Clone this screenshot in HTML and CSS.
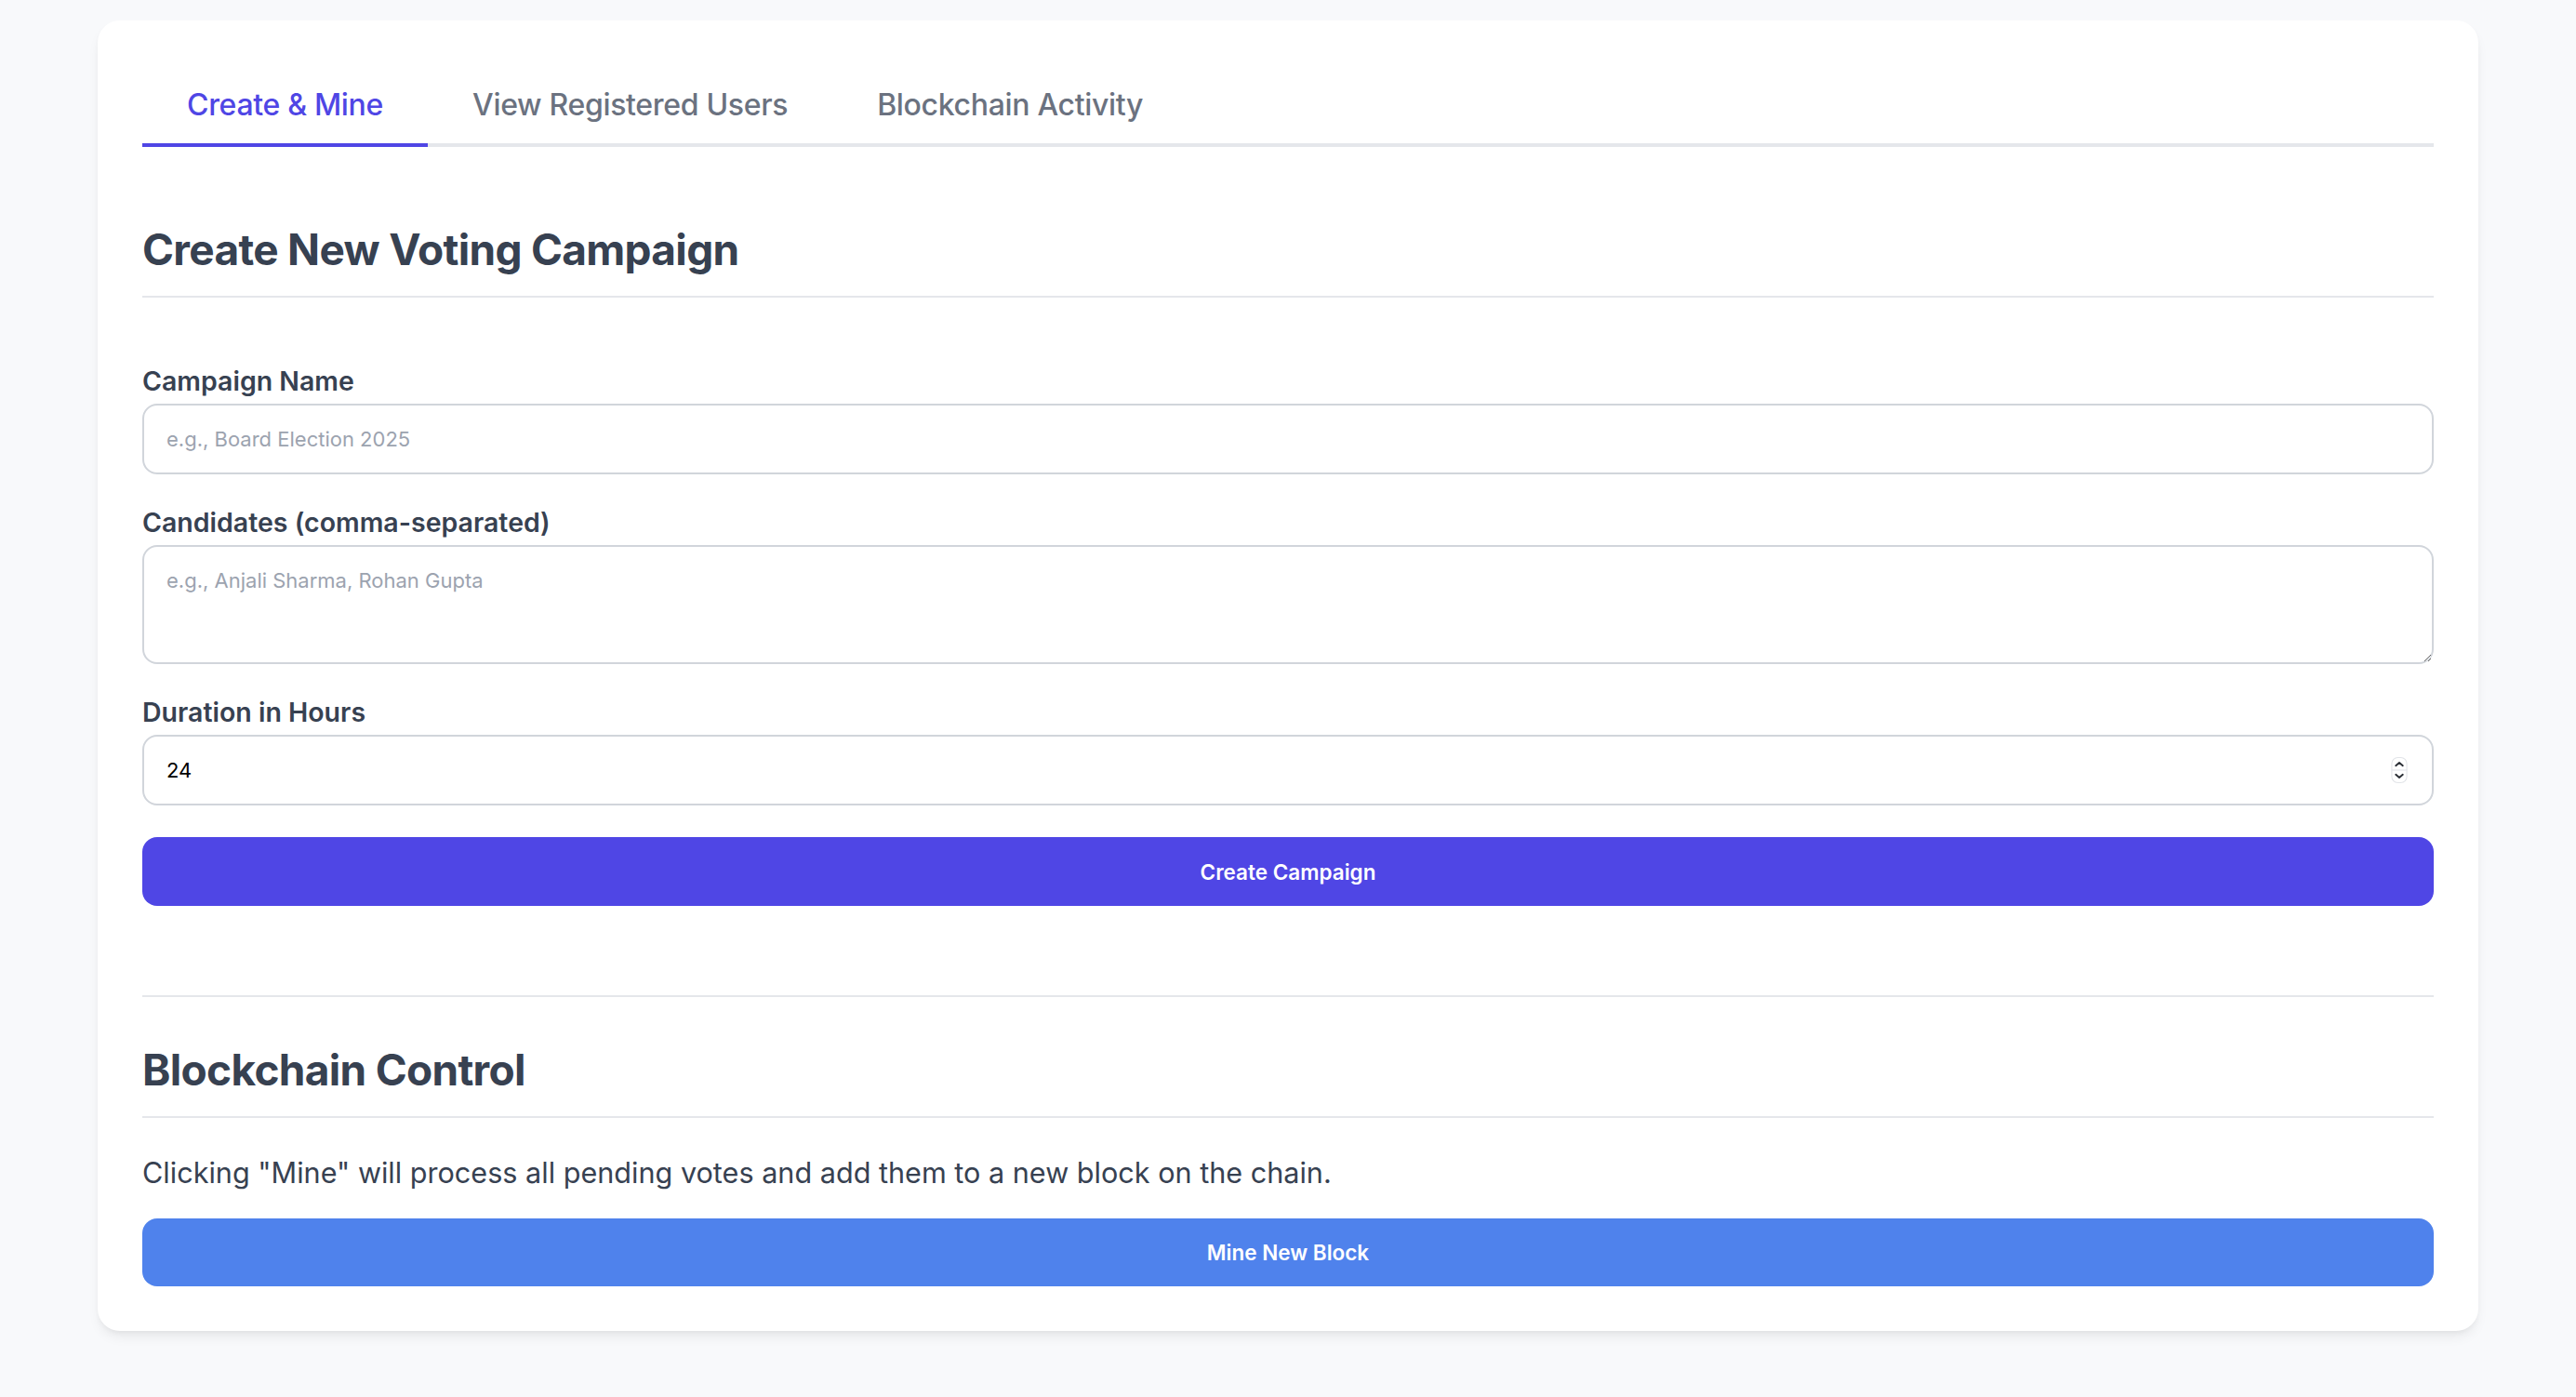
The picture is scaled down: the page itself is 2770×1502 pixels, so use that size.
FILE: index.html
```html
<!DOCTYPE html>
<html lang="en">
<head>
<meta charset="utf-8">
<title>Voting Admin</title>
<link rel="stylesheet" href="styles.css">
</head>
<body>
<main class="card">
  <nav class="tabs">
    <button class="tab tab-active" type="button">Create &amp; Mine</button>
    <button class="tab" type="button">View Registered Users</button>
    <button class="tab" type="button">Blockchain Activity</button>
  </nav>

  <section class="section">
    <h2 class="heading heading-first">Create New Voting Campaign</h2>
    <form class="form">
      <div class="field">
        <label class="label" for="cname">Campaign Name</label>
        <input class="input" id="cname" type="text" placeholder="e.g., Board Election 2025">
      </div>
      <div class="field">
        <label class="label" for="cands">Candidates (comma-separated)</label>
        <textarea class="input textarea" id="cands" placeholder="e.g., Anjali Sharma, Rohan Gupta"></textarea>
      </div>
      <div class="field">
        <label class="label" for="dur">Duration in Hours</label>
        <div class="number-wrap">
          <input class="input number" id="dur" type="number" value="24">
          <span class="spinner">
            <svg viewBox="0 0 16 26" width="16" height="26" aria-hidden="true">
              <rect x="0.5" y="0.5" width="15" height="25" rx="6" fill="#fff" stroke="#e2e4e8"/>
              <line x1="0.5" y1="13" x2="15.5" y2="13" stroke="#e2e4e8"/>
              <path d="M4.5 8.5 L8 5.5 L11.5 8.5" fill="none" stroke="#2b2f36" stroke-width="1.8" stroke-linecap="round" stroke-linejoin="round"/>
              <path d="M4.5 17.5 L8 20.5 L11.5 17.5" fill="none" stroke="#2b2f36" stroke-width="1.8" stroke-linecap="round" stroke-linejoin="round"/>
            </svg>
          </span>
        </div>
      </div>
      <button class="btn btn-indigo" type="button">Create Campaign</button>
    </form>
  </section>

  <section class="section section-divided">
    <h2 class="heading">Blockchain Control</h2>
    <p class="desc">Clicking "Mine" will process all pending votes and add them to a new block on the chain.</p>
    <button class="btn btn-blue" type="button">Mine New Block</button>
  </section>
</main>
</body>
</html>
```

FILE: styles.css
```css
* {
  box-sizing: border-box;
}

html, body {
  margin: 0;
  padding: 0;
}

body {
  background: #f8f9fb;
  font-family: Inter, "Noto Sans", "Liberation Sans", sans-serif;
  color: #374151;
  min-height: 1502px;
  padding-top: 22px;
}

.card {
  width: 2560px;
  margin: 0 auto;
  background: #ffffff;
  border-radius: 24px;
  padding: 48px;
  box-shadow: 0 8px 14px -3px rgba(0, 0, 0, 0.08), 0 3px 6px -2px rgba(0, 0, 0, 0.05);
}

/* Tabs */
.tabs {
  display: flex;
  border-bottom: 4px solid #e5e7eb;
}

.tab {
  appearance: none;
  background: none;
  border: 0;
  border-bottom: 4px solid transparent;
  margin-bottom: -4px;
  padding: 0 48px;
  height: 88px;
  font-family: inherit;
  font-size: 32px;
  font-weight: 500;
  letter-spacing: -0.01em;
  color: #6b7280;
  cursor: pointer;
}

.tab-active {
  color: #4f46e5;
  border-bottom-color: #4f46e5;
}

/* Sections */
.heading {
  margin: 0;
  font-size: 46px;
  line-height: 60px;
  font-weight: 700;
  letter-spacing: -0.015em;
  color: #374151;
  padding-bottom: 20px;
  border-bottom: 2px solid #e5e7eb;
}

.heading-first {
  margin-top: 80px;
}

.form {
  display: flex;
  flex-direction: column;
  margin-top: 70px;
}

.field {
  display: flex;
  flex-direction: column;
  margin-bottom: 32px;
}

.label {
  font-size: 28.5px;
  line-height: 40px;
  font-weight: 600;
  color: #374151;
  margin-bottom: 4px;
}

.input {
  display: block;
  width: 100%;
  height: 76px;
  padding: 16px 24px;
  border: 2px solid #d1d5db;
  border-radius: 16px;
  background: #fff;
  font-family: inherit;
  font-size: 22px;
  line-height: 40px;
  color: #000;
  outline: none;
}

.input::placeholder {
  color: #9ca3af;
}

.textarea {
  height: 128px;
  resize: vertical;
}

.number-wrap {
  position: relative;
}

.number {
  -moz-appearance: textfield;
  appearance: textfield;
}

.number::-webkit-inner-spin-button,
.number::-webkit-outer-spin-button {
  -webkit-appearance: none;
  margin: 0;
}

.spinner {
  position: absolute;
  right: 28px;
  top: 24px;
  width: 18px;
  height: 28px;
  display: flex;
}

.spinner svg {
  width: 18px;
  height: 28px;
}

/* Buttons */
.btn {
  display: block;
  width: 100%;
  height: 74px;
  border: 0;
  border-radius: 16px;
  color: #ffffff;
  font-family: inherit;
  font-size: 22.5px;
  font-weight: 600;
  cursor: pointer;
}

.btn-indigo {
  background: #4f46e5;
  margin-top: 2px;
}

.btn-blue {
  background: #4f82ec;
  height: 73px;
}

.section-divided {
  margin-top: 96px;
  border-top: 2px solid #e5e7eb;
  padding-top: 48px;
}

.desc {
  margin: 35px 0 25px;
  font-size: 30.6px;
  line-height: 48px;
  color: #374151;
}
```
